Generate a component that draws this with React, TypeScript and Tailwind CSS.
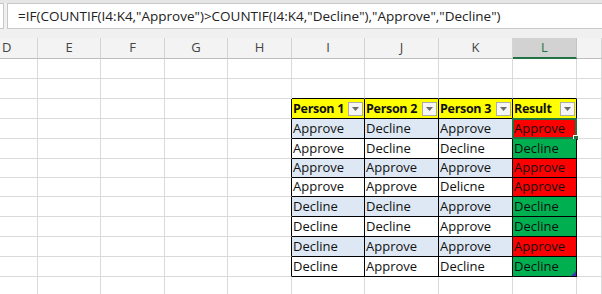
import React from "react";

const FONT = { fontFamily: '"Open Sans", "Noto Sans", sans-serif' };

const widths = ["w-[38px]", "w-[63px]", "w-[64px]", "w-[63px]", "w-[64px]", "w-[73px]", "w-[74px]", "w-[74px]", "w-[64px]", "w-[25px]"];
const letters = ["D", "E", "F", "G", "H", "I", "J", "K", "L", ""];
const heights = ["h-[20px]", "h-[20px]", "h-[20px]", "h-[20px]", "h-[20px]", "h-[19px]", "h-[19px]", "h-[20px]", "h-[20px]", "h-[20px]", "h-[20px]", "h-[18px]"];

const data = [
  ["Approve", "Decline", "Approve", "Approve"],
  ["Approve", "Decline", "Decline", "Decline"],
  ["Approve", "Approve", "Approve", "Approve"],
  ["Approve", "Approve", "Delicne", "Approve"],
  ["Decline", "Decline", "Approve", "Decline"],
  ["Decline", "Decline", "Approve", "Decline"],
  ["Decline", "Approve", "Approve", "Approve"],
  ["Decline", "Approve", "Decline", "Decline"],
];

const headers = ["Person 1", "Person 2", "Person 3", "Result"];

function DropBtn() {
  return (
    <div className="mt-[3px] mr-[1px] w-[15px] h-[14px] shrink-0 border border-[#acacac] bg-[#f5f5f5] flex items-center justify-center">
      <svg width="7" height="4" viewBox="0 0 7 4">
        <path d="M0 0H7L3.5 4Z" fill="#6b6b6b" />
      </svg>
    </div>
  );
}

function Cell({ r, c }: { r: number; c: number }) {
  const w = widths[c];
  const isTableCol = c >= 5 && c <= 8;
  const tableRowIdx = r - 2;
  const inTable = isTableCol && tableRowIdx >= 0 && tableRowIdx <= 8;
  const leftOfTable = c === 4 && tableRowIdx >= 0 && tableRowIdx <= 8;
  const aboveTable = isTableCol && r === 1;

  if (!inTable) {
    const br = leftOfTable ? "border-r-black" : "border-r-[#dadada]";
    const bb = aboveTable ? "border-b-black" : "border-b-[#dadada]";
    return <div className={`${w} h-full box-border border-r border-b ${br} ${bb} shrink-0`} />;
  }

  if (tableRowIdx === 0) {
    return (
      <div className={`${w} h-full box-border border-r border-b border-black bg-[#ffff00] shrink-0 flex justify-between pl-[1px] overflow-hidden`}>
        <span className="font-bold text-[12.5px] tracking-[-0.3px] whitespace-nowrap text-[#111] leading-none self-end mb-[3px]">{headers[c - 5]}</span>
        <DropBtn />
      </div>
    );
  }

  const val = data[tableRowIdx - 1][c - 5];
  let bg = tableRowIdx % 2 === 1 ? "bg-[#dde8f4]" : "bg-white";
  if (c === 8) bg = val === "Approve" ? "bg-[#ff0000]" : "bg-[#00b050]";
  const selected = c === 8 && tableRowIdx === 1;
  const last = c === 8 && tableRowIdx === 8;

  return (
    <div className={`${w} h-full box-border border-r border-b border-black ${bg} shrink-0 flex pl-[1px] relative`}>
      <span className="text-[13px] whitespace-nowrap text-[#111] leading-none self-end mb-[3px]">{val}</span>
      {selected && (
        <>
          <div className="absolute left-[-1px] top-[-1px] w-[65px] h-[21px] border-2 border-[#217346]" />
          <div className="absolute left-[60px] top-[16px] w-[6px] h-[6px] bg-[#217346] border border-white" />
        </>
      )}
      {last && (
        <svg className="absolute right-0 bottom-0" width="5" height="5" viewBox="0 0 5 5">
          <path d="M5 0V5H0Z" fill="#3b3bb0" />
        </svg>
      )}
    </div>
  );
}

export default function App() {
  return (
    <div className="w-[602px] h-[294px] overflow-hidden bg-white flex flex-col" style={FONT}>
      <div className="h-[38px] shrink-0 bg-[#f0f0f0] flex flex-col">
        <div className="h-[3px] bg-[#e6e6e6]" />
        <div className="flex h-[26px]">
          <div className="w-[4px] h-full bg-white border border-l-0 border-[#c8c8c8]" />
          <div className="w-[3px]" />
          <div className="flex-1 h-full bg-white border border-r-0 border-[#c8c8c8] flex items-center pl-[10px]">
            <span className="text-[13.5px] text-[#222] whitespace-nowrap">
              =IF(COUNTIF(I4:K4,"Approve")&gt;COUNTIF(I4:K4,"Decline"),"Approve","Decline")
            </span>
          </div>
        </div>
      </div>
      <div className="h-[21px] shrink-0 flex bg-[#f3f3f3]">
        {letters.map((l, i) => (
          <div
            key={i}
            className={`${widths[i]} h-full box-border shrink-0 flex items-center justify-center text-[13px] ${
              i === 8
                ? "bg-[#d2d2d2] text-[#217346] border-b-2 border-b-[#217346] border-r border-r-[#c4c4c4]"
                : "text-[#444] border-b border-b-[#bdbdbd] border-r border-r-[#d4d4d4]"
            } ${i === 0 ? "justify-start pl-[2px]" : ""}`}
          >
            {l}
          </div>
        ))}
      </div>
      {heights.map((h, r) => (
        <div key={r} className={`${h} shrink-0 flex`}>
          {widths.map((_, c) => (
            <Cell key={c} r={r} c={c} />
          ))}
        </div>
      ))}
    </div>
  );
}
